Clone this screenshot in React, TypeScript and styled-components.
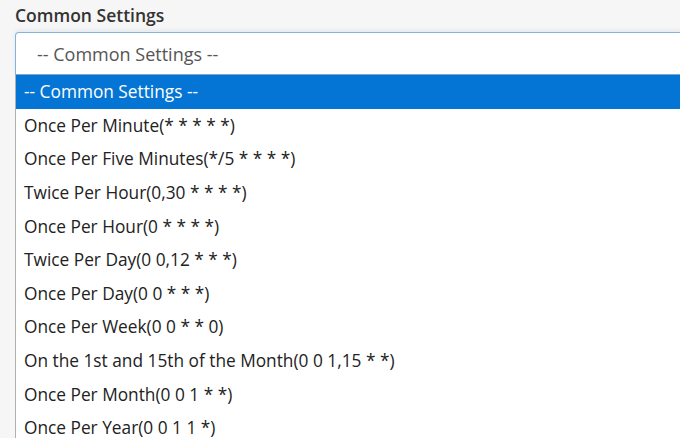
import styled, { createGlobalStyle } from 'styled-components';

const Global = createGlobalStyle`
  body { margin: 0; background: #f6f6f6; font-family: "Open Sans", "Noto Sans", sans-serif; overflow: hidden; }
  #root { width: 680px; overflow: hidden; }
`;

const Page = styled.div`
  padding: 3px 0 0 15px;
  width: 700px;
`;

const Label = styled.div`
  font-weight: 600;
  font-size: 17.5px;
  color: #333;
  height: 29px;
  line-height: 24px;
`;

const SelectBox = styled.div`
  height: 41px;
  border: 1px solid #86b3dd;
  border-bottom-color: #7aa6cf;
  border-radius: 4px 0 0 0;
  background: #fff;
  display: flex;
  align-items: center;
  padding-left: 21px;
  font-size: 18px;
  color: #555;
  box-shadow: 0 -2px 4px rgba(120, 160, 200, 0.15);
`;

const List = styled.ul`
  list-style: none;
  margin: 0;
  padding: 0;
  background: #fff;
  border-left: 1px solid #b0b0b0;
`;

const Item = styled.li<{ $active?: boolean }>`
  height: 33.6px;
  display: flex;
  align-items: center;
  padding-left: 8px;
  font-size: 17.3px;
  color: ${(p) => (p.$active ? '#fff' : '#222')};
  background: ${(p) => (p.$active ? '#0475d4' : '#fff')};
  white-space: nowrap;
`;

const options = [
  '-- Common Settings --',
  'Once Per Minute(* * * * *)',
  'Once Per Five Minutes(*/5 * * * *)',
  'Twice Per Hour(0,30 * * * *)',
  'Once Per Hour(0 * * * *)',
  'Twice Per Day(0 0,12 * * *)',
  'Once Per Day(0 0 * * *)',
  'Once Per Week(0 0 * * 0)',
  'On the 1st and 15th of the Month(0 0 1,15 * *)',
  'Once Per Month(0 0 1 * *)',
  'Once Per Year(0 0 1 1 *)',
];

export default function App() {
  return (
    <Page>
      <Global />
      <Label>Common Settings</Label>
      <SelectBox>-- Common Settings --</SelectBox>
      <List>
        {options.map((o, i) => (
          <Item key={o} $active={i === 0}>
            {o}
          </Item>
        ))}
      </List>
    </Page>
  );
}
